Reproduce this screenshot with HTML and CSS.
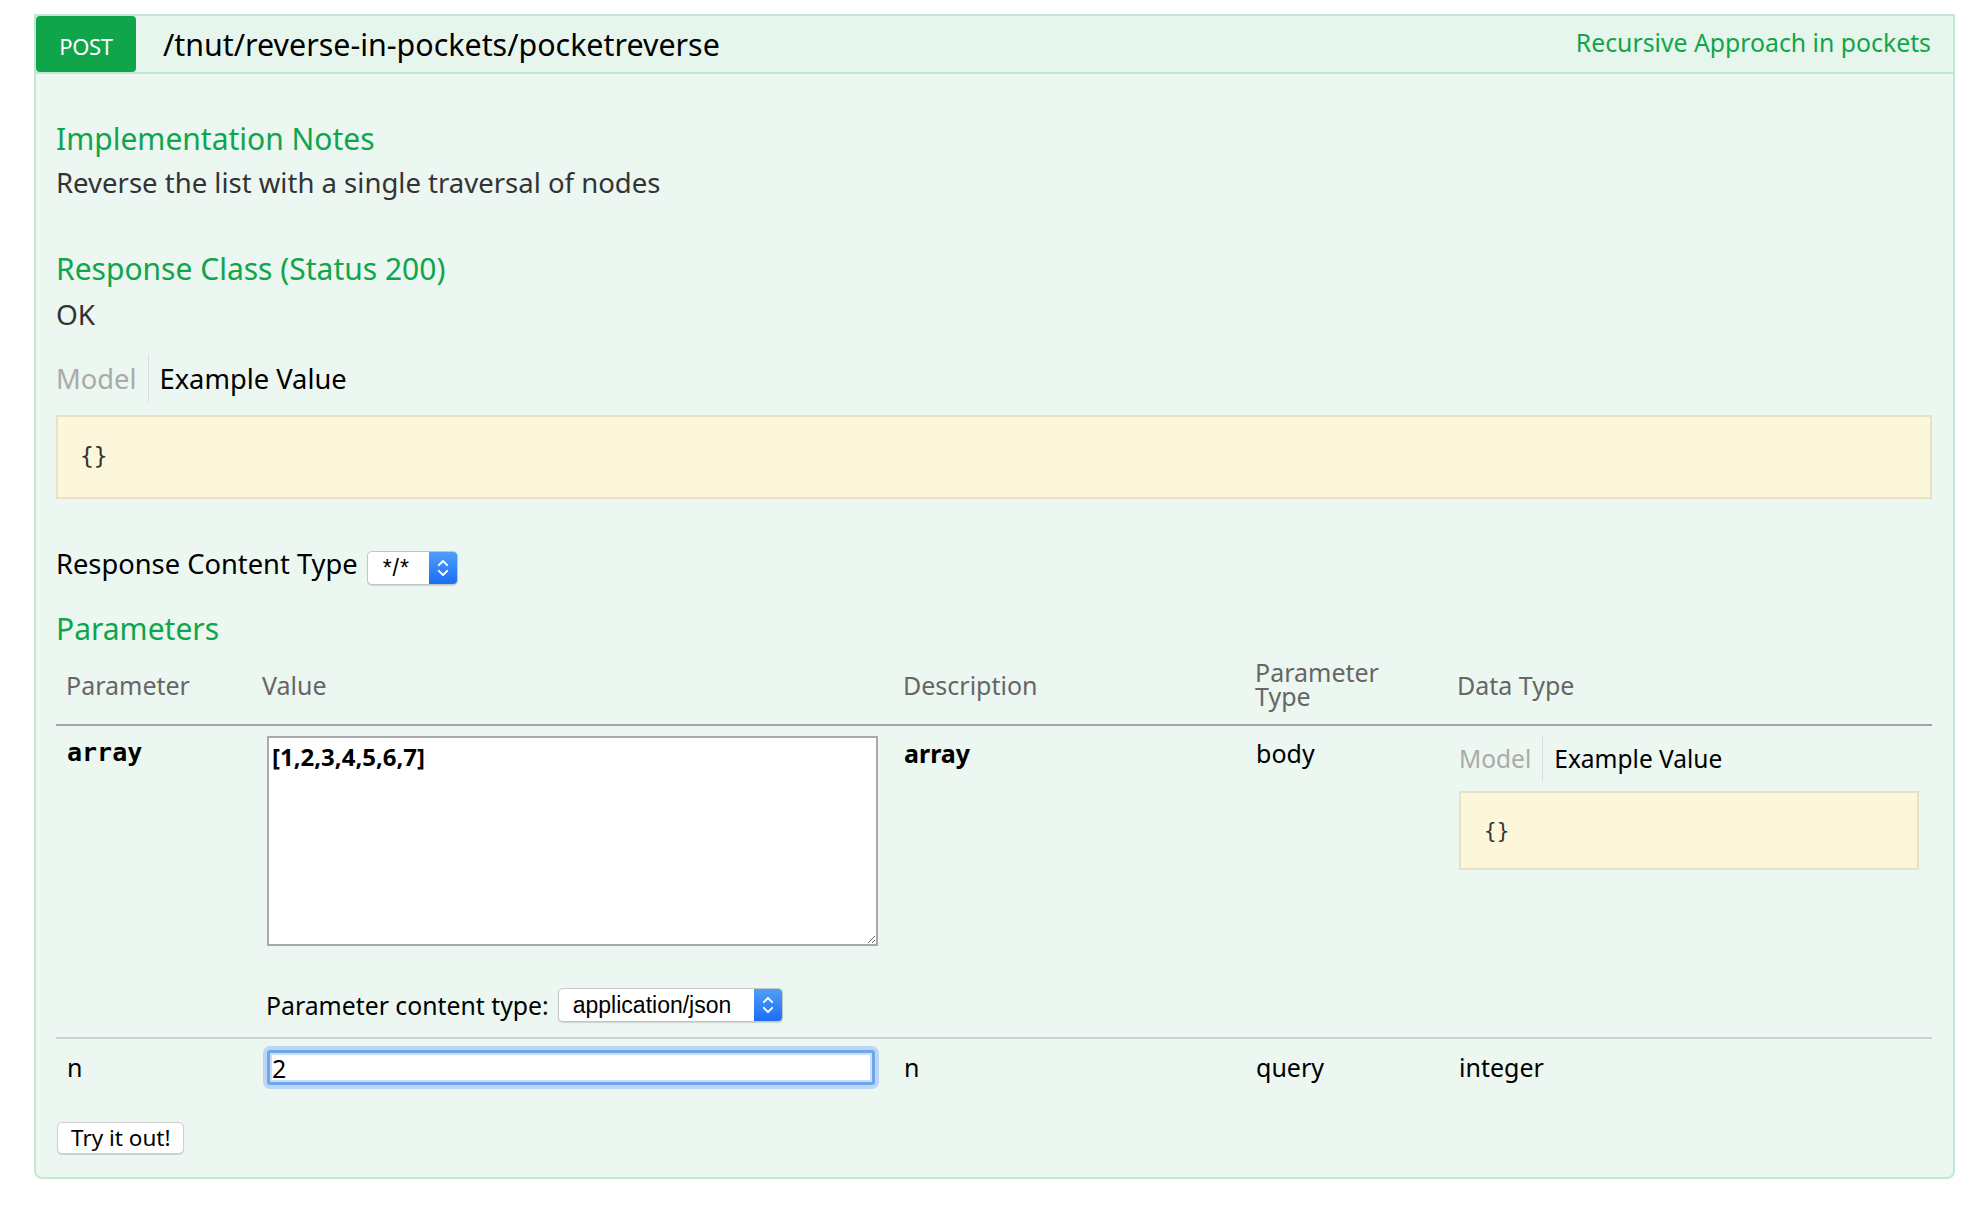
FILE: index.html
```html
<!DOCTYPE html>
<html lang="en">
<head>
<meta charset="utf-8">
<title>pocketreverse</title>
<link rel="stylesheet" href="styles.css">
</head>
<body>
<div class="op">
  <div class="op-heading">
    <span class="verb">POST</span>
    <span class="path">/tnut/reverse-in-pockets/pocketreverse</span>
    <span class="summary">Recursive Approach in pockets</span>
  </div>
  <div class="op-content">
    <h4 class="sec-title first">Implementation Notes</h4>
    <p class="notes">Reverse the list with a single traversal of nodes</p>

    <h4 class="sec-title resp">Response Class (Status 200)</h4>
    <p class="ok">OK</p>

    <div class="sig-tabs">
      <span class="tab tab-model">Model</span>
      <span class="tab tab-example">Example Value</span>
    </div>
    <div class="snippet snippet-main"><code>{}</code></div>

    <div class="ct-row">
      <span class="ct-label">Response Content Type</span>
      <span class="fake-select sel-small">
        <span class="sel-val">*/*</span>
        <span class="sel-arrows"><svg width="12" height="20" viewBox="0 0 12 20"><path d="M1.8 7.2 L6 3 L10.2 7.2 M1.8 12.8 L6 17 L10.2 12.8" fill="none" stroke="#fff" stroke-width="1.9" stroke-linecap="round" stroke-linejoin="round"/></svg></span>
      </span>
    </div>

    <h4 class="sec-title params">Parameters</h4>
    <table class="param-table">
      <colgroup>
        <col class="c1"><col class="c2"><col class="c3"><col class="c4"><col class="c5">
      </colgroup>
      <thead>
        <tr>
          <th>Parameter</th>
          <th>Value</th>
          <th>Description</th>
          <th class="th-two"><span class="th-line">Parameter</span><span class="th-line">Type</span></th>
          <th>Data Type</th>
        </tr>
      </thead>
      <tbody>
        <tr class="row-body">
          <td class="code-name">array</td>
          <td class="val-cell">
            <textarea class="body-input">[1,2,3,4,5,6,7]</textarea>
            <div class="pct-row">
              <span class="pct-label">Parameter content type:</span>
              <span class="fake-select sel-wide">
                <span class="sel-val">application/json</span>
                <span class="sel-arrows"><svg width="12" height="20" viewBox="0 0 12 20"><path d="M1.8 7.2 L6 3 L10.2 7.2 M1.8 12.8 L6 17 L10.2 12.8" fill="none" stroke="#fff" stroke-width="1.9" stroke-linecap="round" stroke-linejoin="round"/></svg></span>
              </span>
            </div>
          </td>
          <td class="bold-desc">array</td>
          <td>body</td>
          <td class="dt-cell">
            <div class="sig-tabs small">
              <span class="tab tab-model">Model</span>
              <span class="tab tab-example">Example Value</span>
            </div>
            <div class="snippet snippet-small"><code>{}</code></div>
          </td>
        </tr>
        <tr class="row-query">
          <td>n</td>
          <td class="val-cell"><input class="q-input" type="text" value="2"></td>
          <td>n</td>
          <td>query</td>
          <td class="dt-cell dt-int">integer</td>
        </tr>
      </tbody>
    </table>

    <button class="try-btn" type="button">Try it out!</button>
  </div>
</div>
</body>
</html>
```
FILE: styles.css
```css
* { box-sizing: border-box; }

body {
  margin: 0;
  background: #ffffff;
  font-family: "Noto Sans", "Open Sans", sans-serif;
  color: #000;
}

.op {
  margin: 14px 0 0 34px;
  width: 1921px;
  border: 2px solid #c3e8d1;
  border-radius: 0 0 8px 8px;
  background: #ebf7f0;
}

.op-heading {
  display: flex;
  align-items: flex-start;
  height: 58px;
  background: #e7f6ec;
  border-bottom: 2px solid #c3e8d1;
}

.verb {
  width: 100px;
  height: 56px;
  line-height: 61px;
  background: #10a54a;
  color: #fff;
  border-radius: 4px;
  text-align: center;
  font-size: 22px;
  letter-spacing: -0.3px;
}

.path {
  margin-left: 27px;
  font-size: 30.4px;
  line-height: 57px;
  color: #000;
}

.summary {
  margin-left: auto;
  padding-right: 22px;
  font-size: 24.8px;
  line-height: 52px;
  color: #10a54a;
}

.op-content {
  padding: 47px 21px 23px 20px;
}

.sec-title {
  margin: 0;
  font-size: 30px;
  line-height: 36px;
  font-weight: normal;
  color: #10a54a;
}

.sec-title.resp { margin-top: 50px; }
.sec-title.params { margin-top: 26px; }

.notes {
  margin: 8px 0 0;
  font-size: 27.5px;
  line-height: 36px;
  color: #333;
}

.ok {
  margin: 9px 0 0;
  font-size: 28px;
  line-height: 36px;
  color: #333;
}

.sig-tabs {
  display: flex;
  margin-top: 22px;
  height: 49px;
}

.tab {
  font-size: 27.3px;
  line-height: 49px;
}

.tab-model {
  color: #aaa;
  padding-right: 11px;
  border-right: 1px solid #ddd;
}

.tab-example {
  color: #000;
  padding-left: 11px;
}

.sig-tabs.small {
  margin-top: 0;
  height: 45px;
}

.sig-tabs.small .tab {
  font-size: 24.5px;
  line-height: 45px;
}

.snippet {
  background: #fcf6db;
  border: 2px solid #e8e1c4;
  display: flex;
  align-items: center;
}

.snippet code {
  font-family: "DejaVu Sans Mono", "Liberation Mono", monospace;
  color: #333;
}

.snippet-main {
  margin-top: 12px;
  height: 84px;
  padding-left: 22px;
  padding-bottom: 3px;
}

.snippet-main code { font-size: 23px; }

.snippet-small {
  margin-top: 10px;
  width: 460px;
  height: 79px;
  padding-left: 23px;
}

.snippet-small code { font-size: 21px; }

.ct-row {
  display: flex;
  align-items: flex-start;
  margin-top: 52px;
}

.ct-label {
  font-size: 27.3px;
  line-height: 26px;
  margin-right: 9px;
}

.fake-select {
  display: inline-flex;
  height: 34px;
  border: 1px solid #c6c6c6;
  border-radius: 5px;
  background: #fff;
  box-shadow: 0 1px 1px rgba(0, 0, 0, 0.14);
  overflow: hidden;
}

.sel-val {
  flex: 1;
  font-family: "Liberation Sans", Arial, sans-serif;
  font-size: 23px;
  line-height: 32px;
  color: #000;
}

.sel-arrows {
  width: 28px;
  display: flex;
  align-items: center;
  justify-content: center;
  background: linear-gradient(#4f9efb, #1a6ff4);
}

.sel-small { width: 91px; }
.sel-small .sel-val { padding-left: 15px; letter-spacing: 1px; }

.sel-wide { width: 225px; }
.sel-wide .sel-val { padding-left: 14px; }

.param-table {
  width: 100%;
  margin-top: 1px;
  border-collapse: separate;
  border-spacing: 0;
  table-layout: fixed;
}

.c1 { width: 196px; }
.c2 { width: 641px; }
.c3 { width: 352px; }
.c4 { width: 202px; }

.param-table th {
  padding: 13px 10px 15px;
  font-size: 25px;
  line-height: 24px;
  font-weight: normal;
  color: #666;
  text-align: left;
  vertical-align: middle;
  border-bottom: 2px solid #a3a3a3;
}

.param-table th.th-two {
  line-height: 22px;
}

.th-line {
  display: block;
  height: 24px;
}

.param-table td {
  font-size: 25px;
  line-height: 34px;
  color: #000;
  vertical-align: top;
  padding: 10px 10px 15px 11px;
}

.param-table .row-query td {
  border-top: 2px solid #cfcfcf;
  padding-top: 11px;
  padding-bottom: 0;
}

.code-name {
  font-family: "DejaVu Sans Mono", "Liberation Mono", monospace;
  font-weight: bold;
}

.bold-desc { font-weight: bold; }

.body-input {
  display: block;
  margin-left: 4px;
  width: 611px;
  height: 210px;
  border: 2px solid #a9a9a9;
  background: #fff;
  padding: 4px 3px;
  font-family: "Noto Sans", sans-serif;
  font-weight: bold;
  font-size: 24px;
  line-height: 30px;
  color: #000;
  resize: both;
}

.pct-row {
  display: flex;
  align-items: center;
  margin-top: 42px;
  margin-left: 3px;
}

.pct-label {
  font-size: 24.8px;
  line-height: 34px;
  margin-right: 9px;
}

.dt-cell { padding-left: 12px !important; }

.q-input {
  display: block;
  margin-left: 4px;
  width: 608px;
  height: 35px;
  border: 3px solid #6fa5ea;
  border-radius: 3px;
  box-shadow: 0 0 0 4px #bcd7f6, inset 0 0 0 2px #c9def8;
  background: #fff;
  padding: 0 2px;
  font-family: "Noto Sans", sans-serif;
  font-size: 25px;
  color: #000;
  outline: none;
}

.try-btn {
  display: block;
  margin-top: 37px;
  margin-left: 1px;
  height: 32px;
  padding: 0 13px;
  background: #fff;
  border: 1px solid #cfcfcf;
  border-radius: 5px;
  box-shadow: 0 1px 1px rgba(0, 0, 0, 0.15);
  font-family: "Noto Sans", sans-serif;
  font-size: 22.5px;
  line-height: 28px;
  color: #000;
}
```
